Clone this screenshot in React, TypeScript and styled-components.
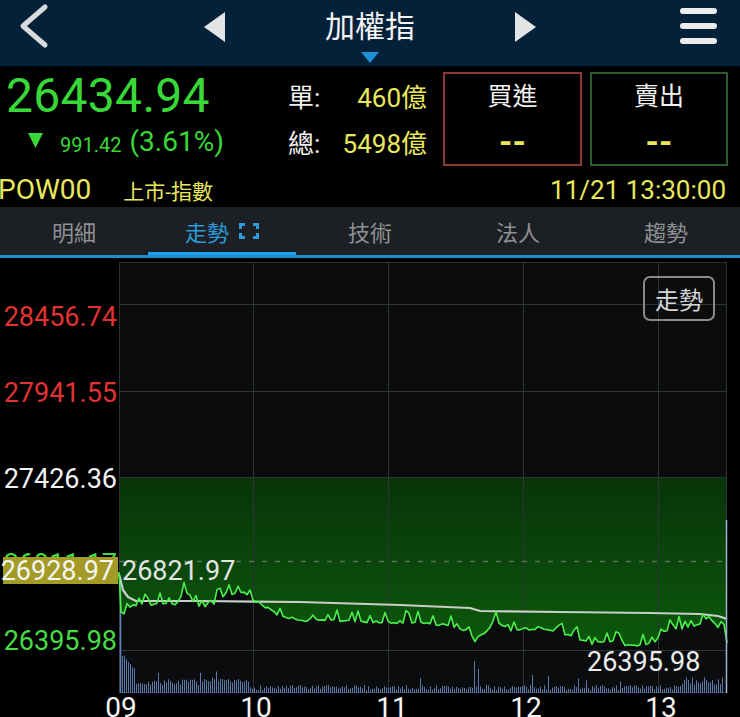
import React from "react";
import styled, { createGlobalStyle } from "styled-components";

const GlobalStyle = createGlobalStyle`
  html, body {
    margin: 0;
    padding: 0;
    background: #000;
  }
  body {
    font-family: Roboto, "Noto Sans CJK TC", sans-serif;
  }
`;

const GREEN = "#38d838";
const YELLOW = "#e8e85c";

const Screen = styled.div`
  width: 740px;
  height: 717px;
  overflow: hidden;
  background: #000;
  display: flex;
  flex-direction: column;
`;

/* ---------- top bar ---------- */

const TopBar = styled.header`
  height: 66px;
  flex: none;
  display: flex;
  background: #04213a;
  border-bottom: 1px solid #01080f;
`;

const Side = styled.div<{ $end?: boolean }>`
  width: 66px;
  flex: none;
  display: flex;
  box-sizing: border-box;
  justify-content: ${(p) => (p.$end ? "flex-end" : "flex-start")};
  padding: ${(p) => (p.$end ? "8px 23px 0 0" : "3px 0 0 19px")};
`;

const NavGroup = styled.div`
  flex: 1;
  display: flex;
  justify-content: center;
  align-items: flex-start;
  gap: 100px;
  padding-top: 12px;
`;

const TitleBlock = styled.div`
  display: flex;
  flex-direction: column;
  align-items: center;
`;

const Title = styled.div`
  font-size: 30px;
  line-height: 30px;
  color: #f4f4f4;
  white-space: nowrap;
`;

const Caret = styled.div`
  margin-top: 10px;
  width: 0;
  height: 0;
  border-left: 9px solid transparent;
  border-right: 9px solid transparent;
  border-top: 11px solid #1f90d8;
`;

const Menu = styled.div`
  display: flex;
  flex-direction: column;
  gap: 9px;
`;

const MenuBar = styled.span`
  display: block;
  width: 37px;
  height: 6px;
  border-radius: 3px;
  background: #ececec;
`;

/* ---------- quote ---------- */

const Quote = styled.section`
  height: 140px;
  flex: none;
  display: flex;
  flex-direction: column;
`;

const QuoteTop = styled.div`
  height: 105px;
  box-sizing: border-box;
  padding-top: 5px;
  display: flex;
`;

const PriceCol = styled.div`
  width: 288px;
  flex: none;
`;

const BigPrice = styled.div`
  font-size: 48px;
  line-height: 48px;
  color: ${GREEN};
  padding-left: 6px;
  letter-spacing: 0.3px;
`;

const ChangeRow = styled.div`
  display: flex;
  align-items: flex-start;
  margin-top: 8px;
  padding-left: 28px;
  color: ${GREEN};
`;

const DownMark = styled.svg`
  margin-top: 5px;
  margin-right: 17px;
  flex: none;
`;

const ChangeSmall = styled.span`
  font-size: 20px;
  line-height: 20px;
  margin-top: 7px;
  margin-right: 8px;
`;

const ChangeBig = styled.span`
  font-size: 28px;
  line-height: 28px;
`;

const VolCol = styled.div`
  width: 139px;
  flex: none;
  margin-top: 11px;
  display: flex;
  flex-direction: column;
  gap: 16px;
`;

const VolRow = styled.div`
  display: flex;
  justify-content: space-between;
  font-size: 26px;
  line-height: 30px;
`;

const VolLabel = styled.span`
  color: #f0f0f0;
`;

const VolValue = styled.span`
  color: ${YELLOW};
`;

const TradeBox = styled.div<{ $border: string; $w: number; $gap: number }>`
  width: ${(p) => p.$w}px;
  height: 94px;
  margin-left: ${(p) => p.$gap}px;
  flex: none;
  box-sizing: border-box;
  border: 2px solid ${(p) => p.$border};
  display: flex;
  flex-direction: column;
  align-items: center;
`;

const TradeTitle = styled.div`
  margin-top: 8px;
  font-size: 25px;
  line-height: 30px;
  color: #f2f2f2;
`;

const TradeValue = styled.div`
  margin-top: 14px;
  font-size: 34px;
  line-height: 30px;
  font-weight: 700;
  color: ${YELLOW};
`;

const QuoteBottom = styled.div`
  height: 35px;
  box-sizing: border-box;
  padding: 2px 14px 0 0;
  display: flex;
  align-items: baseline;
  color: ${YELLOW};
`;

const Code = styled.span`
  font-size: 28px;
  line-height: 31px;
  margin-left: -2px;
`;

const Market = styled.span`
  font-size: 21px;
  margin-left: 32px;
`;

const Stamp = styled.span`
  font-size: 26px;
  margin-left: auto;
`;

/* ---------- tabs ---------- */

const TabBar = styled.nav`
  height: 51px;
  flex: none;
  box-sizing: border-box;
  background: #1c1f24;
  border-bottom: 3px solid #1f8ccd;
  display: grid;
  grid-template-columns: repeat(5, 1fr);
`;

const Tab = styled.div<{ $active?: boolean }>`
  display: flex;
  align-items: center;
  justify-content: center;
  gap: 10px;
  font-size: 22px;
  color: ${(p) => (p.$active ? "#2a9bd8" : "#8e9093")};
  box-shadow: ${(p) => (p.$active ? "inset 0 -3px 0 #18a6f0" : "none")};
`;

/* ---------- chart ---------- */

const ChartArea = styled.div`
  position: relative;
  height: 459px;
  flex: none;
`;

const ChartSvg = styled.svg`
  display: block;
`;

const ModeButton = styled.div`
  position: absolute;
  top: 18px;
  right: 25px;
  width: 72px;
  height: 45px;
  box-sizing: border-box;
  border: 2px solid #8a8a8a;
  border-radius: 7px;
  display: flex;
  align-items: center;
  justify-content: center;
  font-size: 24px;
  color: #d6d6d6;
`;

const rng = (s: number) => () => {
  s = (s + 0x6d2b79f5) | 0;
  let t = Math.imul(s ^ (s >>> 15), 1 | s);
  t = (t + Math.imul(t ^ (t >>> 7), 61 | t)) ^ t;
  return ((t ^ (t >>> 14)) >>> 0) / 4294967296;
};

const lerp = (pts: number[][], x: number) => {
  for (let i = 1; i < pts.length; i++) {
    if (x <= pts[i][0]) {
      const [x0, y0] = pts[i - 1];
      const [x1, y1] = pts[i];
      return y0 + ((y1 - y0) * (x - x0)) / (x1 - x0);
    }
  }
  return pts[pts.length - 1][1];
};

const priceCtrl = [
  [119, 572], [121, 612], [124, 614], [130, 606], [140, 604], [150, 607],
  [160, 602], [175, 605], [182, 594], [188, 592], [194, 605], [210, 606],
  [222, 598], [230, 594], [245, 593], [252, 600], [262, 604], [272, 612],
  [282, 617], [300, 620], [340, 621], [380, 622], [420, 622], [450, 626],
  [470, 631], [476, 645], [486, 632], [498, 622], [510, 630], [540, 628],
  [560, 633], [575, 638], [590, 644], [610, 641], [630, 646], [645, 646],
  [655, 641], [662, 631], [680, 628], [700, 624], [708, 617], [716, 625],
  [722, 632], [727, 643],
];

const avgCtrl = [
  [119, 574], [123, 590], [128, 597], [136, 601], [200, 601], [300, 602],
  [400, 605], [470, 608], [480, 611], [560, 612], [650, 613], [700, 614],
  [718, 616], [727, 619],
];

const buildPrice = () => {
  const r = rng(21);
  const pts: number[][] = [[119, 572], [121, 612]];
  for (let x = 124; x <= 724; x += 3) {
    const spike = r() < 0.32 ? -(3 + r() * 9) : (r() - 0.5) * 3;
    pts.push([x, lerp(priceCtrl, x) + spike]);
  }
  pts.push([727, 643]);
  return pts;
};

const buildVolume = () => {
  const r = rng(7);
  const bars: number[][] = [];
  for (let x = 122; x <= 722; x += 2) {
    let h: number;
    if (x < 136) h = 37 - (x - 122) * 1.2 + r() * 3;
    else if (x < 250) h = 8 + r() * 6;
    else if (x > 680) h = 8 + r() * 8;
    else h = 3 + r() * 5;
    if (r() < 0.05) h += 6 + r() * 6;
    if (x === 474) h = 32;
    if (x === 478) h = 24;
    if (x === 200) h = 20;
    bars.push([x, h]);
  }
  return bars;
};

const price = buildPrice();
const avg = avgCtrl;
const volume = buildVolume();

const toPath = (pts: number[][]) =>
  pts.map((p, i) => `${i ? "L" : "M"}${p[0].toFixed(1)},${p[1].toFixed(1)}`).join(" ");

const fillPath = `M119,477 ${toPath(price).replace(/^M/, "L")} L727,477 Z`;
const volPath = volume.map(([x, h]) => `M${x + 0.5},693 V${(693 - h).toFixed(1)}`).join(" ");

const vGrid = [253, 388, 523, 658];
const hGrid = [304, 391, 477, 650];

const yLabels = [
  { v: "28456.74", y: 326, c: "#e23232" },
  { v: "27941.55", y: 402, c: "#e23232" },
  { v: "27426.36", y: 488, c: "#f2f2f2" },
  { v: "26911.17", y: 573, c: "#44dd44" },
  { v: "26395.98", y: 650, c: "#44dd44" },
];

const times = [
  { t: "09", x: 121 },
  { t: "10", x: 256 },
  { t: "11", x: 392 },
  { t: "12", x: 526 },
  { t: "13", x: 661 },
];

const Chart = () => (
  <ChartArea>
    <ChartSvg width={740} height={459} viewBox="0 258 740 459" fontFamily="Roboto, sans-serif">
      <defs>
        <linearGradient id="fillG" x1="0" y1="477" x2="0" y2="640" gradientUnits="userSpaceOnUse">
          <stop offset="0" stopColor="#083409" />
          <stop offset="1" stopColor="#0c570c" />
        </linearGradient>
      </defs>
      <rect x={119} y={262} width={607} height={431} fill="#0b0c0e" />
      <path d={fillPath} fill="url(#fillG)" />
      <g stroke="#2e3436" strokeWidth={1}>
        {vGrid.map((x) => (
          <line key={x} x1={x + 0.5} y1={262} x2={x + 0.5} y2={693} />
        ))}
        {hGrid.map((y) => (
          <line key={y} x1={119} y1={y + 0.5} x2={726} y2={y + 0.5} />
        ))}
        <rect x={119.5} y={262.5} width={607} height={430} fill="none" />
      </g>
      <line x1={119} y1={561.5} x2={726} y2={561.5} stroke="#587458" strokeWidth={1.5} strokeDasharray="5 8" />
      <path d={volPath} stroke="#5a78a8" strokeWidth={1} />
      <line x1={120.5} y1={578} x2={120.5} y2={693} stroke="#5f80ba" strokeWidth={1.5} />
      <path d={toPath(avg)} fill="none" stroke="#c8cec8" strokeWidth={2.2} strokeLinejoin="round" />
      <path d={toPath(price)} fill="none" stroke="#4cf04c" strokeWidth={1.6} strokeLinejoin="round" />
      <line x1={726.5} y1={520} x2={726.5} y2={693} stroke="#9fb2d2" strokeWidth={1.5} />

      <g fontSize={27}>
        {yLabels.map((l) => (
          <text key={l.v} x={117} y={l.y} fill={l.c} textAnchor="end">
            {l.v}
          </text>
        ))}
        <rect x={3} y={557} width={115} height={27} fill="#a39b26" />
        <text x={114} y={580} fill="#f6f6f6" textAnchor="end">
          26928.97
        </text>
        <text x={122} y={580} fill="#e4e4e4">
          26821.97
        </text>
        <text x={587} y={671} fill="#ececec">
          26395.98
        </text>
      </g>
      <g fontSize={28} fill="#f4f4f4" textAnchor="middle">
        {times.map((t) => (
          <text key={t.t} x={t.x} y={717}>
            {t.t}
          </text>
        ))}
      </g>
    </ChartSvg>
    <ModeButton>走勢</ModeButton>
  </ChartArea>
);

const ExpandIcon = () => (
  <svg width={20} height={16} viewBox="0 0 20 16" fill="none" stroke="#2a9bd8" strokeWidth={3}>
    <path d="M1.5 6 V1.5 H6 M14 1.5 H18.5 V6 M1.5 10 V14.5 H6 M14 14.5 H18.5 V10" />
  </svg>
);

export default function App() {
  return (
    <Screen>
      <GlobalStyle />
      <TopBar>
        <Side>
          <svg width={30} height={46} viewBox="0 0 30 46">
            <polyline points="26,4 4,23 26,42" fill="none" stroke="#d8dadc" strokeWidth={5} strokeLinecap="round" strokeLinejoin="round" />
          </svg>
        </Side>
        <NavGroup>
          <svg width={21} height={30} viewBox="0 0 21 30">
            <polygon points="21,0 0,15 21,30" fill="#e2e4e6" />
          </svg>
          <TitleBlock>
            <Title>加權指</Title>
            <Caret />
          </TitleBlock>
          <svg width={21} height={30} viewBox="0 0 21 30">
            <polygon points="0,0 21,15 0,30" fill="#e2e4e6" />
          </svg>
        </NavGroup>
        <Side $end>
          <Menu>
            <MenuBar />
            <MenuBar />
            <MenuBar />
          </Menu>
        </Side>
      </TopBar>

      <Quote>
        <QuoteTop>
          <PriceCol>
            <BigPrice>26434.94</BigPrice>
            <ChangeRow>
              <DownMark width={15} height={15} viewBox="0 0 15 15">
                <polygon points="0,0 15,0 7.5,15" fill={GREEN} />
              </DownMark>
              <ChangeSmall>991.42</ChangeSmall>
              <ChangeBig>(3.61%)</ChangeBig>
            </ChangeRow>
          </PriceCol>
          <VolCol>
            <VolRow>
              <VolLabel>單:</VolLabel>
              <VolValue>460億</VolValue>
            </VolRow>
            <VolRow>
              <VolLabel>總:</VolLabel>
              <VolValue>5498億</VolValue>
            </VolRow>
          </VolCol>
          <TradeBox $border="#8a3936" $w={139} $gap={16}>
            <TradeTitle>買進</TradeTitle>
            <TradeValue>--</TradeValue>
          </TradeBox>
          <TradeBox $border="#2f5a2f" $w={138} $gap={8}>
            <TradeTitle>賣出</TradeTitle>
            <TradeValue>--</TradeValue>
          </TradeBox>
        </QuoteTop>
        <QuoteBottom>
          <Code>POW00</Code>
          <Market>上市-指數</Market>
          <Stamp>11/21 13:30:00</Stamp>
        </QuoteBottom>
      </Quote>

      <TabBar>
        <Tab>明細</Tab>
        <Tab $active>
          走勢
          <ExpandIcon />
        </Tab>
        <Tab>技術</Tab>
        <Tab>法人</Tab>
        <Tab>趨勢</Tab>
      </TabBar>

      <Chart />
    </Screen>
  );
}
